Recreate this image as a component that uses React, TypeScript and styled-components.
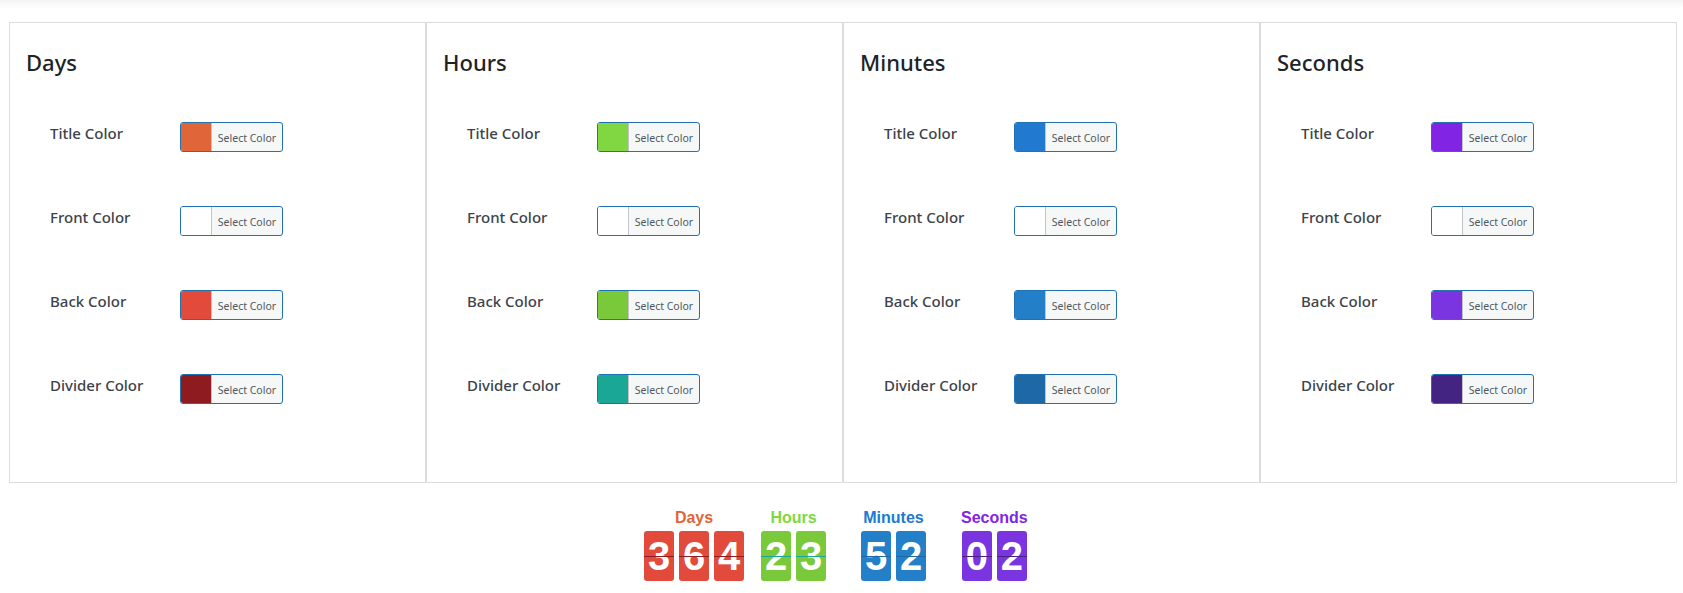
import styled, { createGlobalStyle } from "styled-components";

const GlobalStyle = createGlobalStyle`
  html, body {
    margin: 0;
    padding: 0;
    background: #ffffff;
  }
  body {
    font-family: "Noto Sans", "Open Sans", Arial, sans-serif;
    color: #1d2327;
  }
`;

const Page = styled.div`
  width: 1683px;
  height: 593px;
  overflow: hidden;
  background: #ffffff;
`;

const TopShade = styled.div`
  height: 22px;
  background: linear-gradient(to bottom, #f3f3f4 0px, #fbfbfb 5px, #ffffff 9px);
`;

const PanelGrid = styled.div`
  display: grid;
  grid-template-columns: repeat(4, 417px);
  margin-left: 9px;
`;

const Panel = styled.section`
  height: 461px;
  box-sizing: border-box;
  border: 1px solid #dcdcde;
  padding: 24px 16px 0 16px;
`;

const Heading = styled.h2`
  margin: 0;
  font-size: 22px;
  font-weight: 500;
  line-height: 30px;
  color: #1d2327;
`;

const Rows = styled.div`
  display: flex;
  flex-direction: column;
  gap: 54px;
  padding: 45px 0 0 24px;
`;

const Row = styled.div`
  display: flex;
  align-items: flex-start;
  height: 30px;
`;

const Label = styled.span`
  width: 130px;
  font-size: 15px;
  font-weight: 500;
  line-height: 20px;
  padding-top: 1px;
  color: #3c434a;
`;

const Picker = styled.button<{ $swatch: string }>`
  display: flex;
  align-items: stretch;
  width: 103px;
  height: 30px;
  padding: 0;
  box-sizing: border-box;
  border: 1px solid #2271b1;
  border-radius: 3px;
  background: #f6f7f7;
  overflow: hidden;
  cursor: pointer;

  &::before {
    content: "";
    width: 30px;
    flex: none;
    background: ${(p) => p.$swatch};
    border-right: 1px solid #c3c4c7;
  }
`;

const PickerText = styled.span`
  flex: 1;
  align-self: center;
  font-family: "Noto Sans", "Open Sans", Arial, sans-serif;
  font-size: 10.5px;
  color: #50575e;
  text-align: center;
  padding-top: 1px;
`;

const Countdown = styled.div`
  display: flex;
  justify-content: flex-start;
  align-items: flex-end;
  padding: 25px 0 0 644px;
  font-family: "Liberation Sans", Arial, sans-serif;
`;

const Group = styled.div<{ $lead: number }>`
  display: flex;
  flex-direction: column;
  align-items: center;
  margin-left: ${(p) => p.$lead}px;
`;

const GroupLabel = styled.div<{ $color: string }>`
  font-size: 16px;
  font-weight: 700;
  line-height: 20px;
  margin-bottom: 3px;
  color: ${(p) => p.$color};
`;

const Cards = styled.div`
  display: flex;
  gap: 5px;
`;

const Card = styled.div<{ $back: string; $front: string; $divider: string }>`
  position: relative;
  width: 30px;
  height: 50px;
  border-radius: 3px;
  background: ${(p) => p.$back};
  color: ${(p) => p.$front};
  font-size: 40px;
  font-weight: 700;
  line-height: 50px;
  text-align: center;

  &::after {
    content: "";
    position: absolute;
    left: 0;
    right: 0;
    top: 25px;
    height: 1px;
    background: ${(p) => p.$divider};
  }
`;

interface Unit {
  name: string;
  title: string;
  front: string;
  back: string;
  divider: string;
  value: string;
  lead: number;
}

const units: Unit[] = [
  { name: "Days", title: "#e0663a", front: "#ffffff", back: "#e24b3b", divider: "#8e1b1f", value: "364", lead: 0 },
  { name: "Hours", title: "#81d742", front: "#ffffff", back: "#7ac93a", divider: "#1aa795", value: "23", lead: 17 },
  { name: "Minutes", title: "#2179d0", front: "#ffffff", back: "#227fc8", divider: "#1e68a6", value: "52", lead: 35 },
  { name: "Seconds", title: "#8224e3", front: "#ffffff", back: "#7a35e0", divider: "#432482", value: "02", lead: 35 },
];

const fields: { label: string; key: "title" | "front" | "back" | "divider" }[] = [
  { label: "Title Color", key: "title" },
  { label: "Front Color", key: "front" },
  { label: "Back Color", key: "back" },
  { label: "Divider Color", key: "divider" },
];

const App = () => {
  return (
    <Page>
      <GlobalStyle />
      <TopShade />
      <PanelGrid>
        {units.map((u) => (
          <Panel key={u.name}>
            <Heading>{u.name}</Heading>
            <Rows>
              {fields.map((f) => (
                <Row key={f.key}>
                  <Label>{f.label}</Label>
                  <Picker $swatch={u[f.key]}>
                    <PickerText>Select Color</PickerText>
                  </Picker>
                </Row>
              ))}
            </Rows>
          </Panel>
        ))}
      </PanelGrid>
      <Countdown>
        {units.map((u) => (
          <Group key={u.name} $lead={u.lead}>
            <GroupLabel $color={u.title}>{u.name}</GroupLabel>
            <Cards>
              {u.value.split("").map((d, i) => (
                <Card key={i} $back={u.back} $front={u.front} $divider={u.divider}>
                  {d}
                </Card>
              ))}
            </Cards>
          </Group>
        ))}
      </Countdown>
    </Page>
  );
};

export default App;
